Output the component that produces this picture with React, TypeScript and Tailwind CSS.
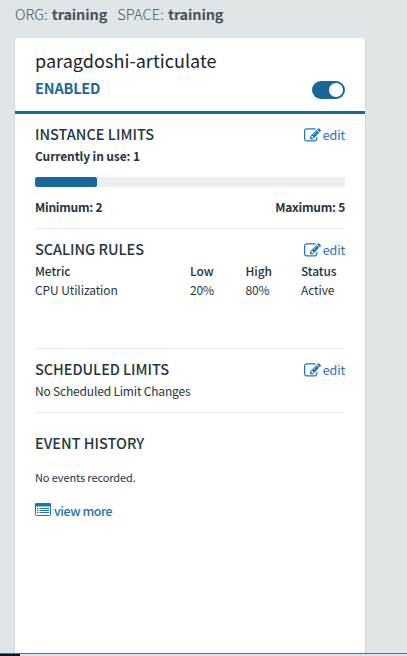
import React from "react";

const EditIcon = () => (
  <svg viewBox="0 0 1792 1792" className="h-[17px] w-[17px] fill-[#1f74b3]">
    <path d="M888 1184l116-116-152-152-116 116v56h96v96h56zm440-720q-16-16-33 1l-350 350q-17 17-1 33t33-1l350-350q17-17 1-33zm80 594v190q0 119-84.5 203.5t-203.5 84.5h-832q-119 0-203.5-84.5t-84.5-203.5v-832q0-119 84.5-203.5t203.5-84.5h832q63 0 117 25 15 7 18 23 3 17-9 29l-49 49q-14 14-32 8-23-6-45-6h-832q-66 0-113 47t-47 113v832q0 66 47 113t113 47h832q66 0 113-47t47-113v-126q0-13 9-22l64-64q15-15 35-7t20 29zm-96-738l288 288-672 672h-288v-288zm444 132l-92 92-288-288 92-92q28-28 68-28t68 28l152 152q28 28 28 68t-28 68z" />
  </svg>
);

const ListIcon = () => (
  <svg viewBox="0 0 16 13" className="mt-[-3px] h-[13px] w-[16px]">
    <rect x="0.5" y="0.5" width="15" height="12" rx="1" fill="#fff" stroke="#1f74b3" />
    <path d="M0 3.5V1.2Q0 0 1.2 0H14.8Q16 0 16 1.2V3.5Z" fill="#1f74b3" />
    <path d="M2 5.5h1.4M2 7.5h1.4M2 9.5h1.4M4.5 5.5h9.5M4.5 7.5h9.5M4.5 9.5h9.5" stroke="#1f74b3" />
  </svg>
);

const Edit = () => (
  <a className="flex h-5 items-center gap-[2px] pt-[2px] text-[12.5px] leading-5 text-[#1f74b3]">
    <EditIcon />
    <span className="-mr-[0.1px] tracking-[-0.1px]">edit</span>
  </a>
);

const heading = "text-[14.5px] leading-5 font-medium tracking-[-0.05px] whitespace-nowrap";

export default function App() {
  return (
    <div className="flex h-[656px] w-[407px] flex-col overflow-hidden bg-[#e0e5e8] font-['Noto_Sans_CJK_SC',sans-serif] text-[#243640]">
      <header className="flex h-[38px] shrink-0 gap-[10px] pt-1 pl-[15px] text-[14.5px] leading-5 whitespace-nowrap text-[#4a5861]">
        <div className="flex gap-1"><span className="font-light">ORG:</span><b className="tracking-[-0.15px] text-[#46535b]">training</b></div>
        <div className="flex gap-1"><span className="font-light tracking-[0.15px]">SPACE:</span><b className="tracking-[-0.15px] text-[#46535b]">training</b></div>
      </header>
      <main className="mx-[14px] flex w-[352px] flex-1 flex-col rounded-t-[4px] border-x border-[#d0d7dc] bg-white">
        <div className="flex h-[76px] shrink-0 items-start justify-between border-b-3 border-[#1a6799] px-5 pt-[10px]">
          <div>
            <h1 className="text-[18px] leading-6 font-normal tracking-[0.05px] whitespace-nowrap text-[#1b2529]">paragdoshi-articulate</h1>
            <div className="mt-[6px] text-[14.5px] leading-5 font-bold tracking-[-0.2px] text-[#1a6799]">ENABLED</div>
          </div>
          <div className="mt-[33px] flex h-[18px] w-[33px] items-center justify-end rounded-full bg-[#1a6799] pr-[2px]">
            <div className="h-[14px] w-[14px] rounded-full bg-white" />
          </div>
        </div>
        <section className="mx-5 h-[115px] shrink-0 border-b border-[#e9edef] pt-[10px]">
          <div className="flex justify-between"><h2 className="text-[14.5px] leading-5 font-medium whitespace-nowrap">INSTANCE LIMITS</h2><Edit /></div>
          <div className="mt-[2px] text-[12px] leading-5 font-bold tracking-[-0.12px]">Currently in use: 1</div>
          <div className="mt-[11px] h-[10px] overflow-hidden rounded-[2px] bg-[#ebeff0]">
            <div className="h-full w-[62px] rounded-[2px] bg-[#1a6799]" />
          </div>
          <div className="mt-[10px] flex justify-between text-[12px] leading-5 font-bold tracking-[-0.25px]"><span>Minimum: 2</span><span>Maximum: 5</span></div>
        </section>
        <section className="mx-5 h-[120px] shrink-0 border-b border-[#e9edef] pt-[10px]">
          <div className="flex justify-between"><h2 className={heading}>SCALING RULES</h2><Edit /></div>
          <div className="mt-[2px] grid grid-cols-[155px_55.5px_55.5px_44px] text-[12px] leading-[19px] tracking-[-0.1px] whitespace-nowrap">
            <span className="font-medium">Metric</span><span className="font-medium">Low</span><span className="font-medium">High</span><span className="font-medium">Status</span>
            <span>CPU Utilization</span><span>20%</span><span>80%</span><span>Active</span>
          </div>
        </section>
        <section className="mx-5 h-16 shrink-0 border-b border-[#e9edef] pt-[10px]">
          <div className="flex justify-between"><h2 className={heading}>SCHEDULED LIMITS</h2><Edit /></div>
          <p className="mt-[2px] text-[12px] leading-5 tracking-[-0.18px]">No Scheduled Limit Changes</p>
        </section>
        <section className="mx-5 flex-1 pt-[20px]">
          <h2 className="text-[14.5px] leading-5 font-medium whitespace-nowrap">EVENT HISTORY</h2>
          <p className="mt-[14px] text-[11px] leading-5 tracking-[-0.1px]">No events recorded.</p>
          <a className="mt-[14px] flex h-5 items-center gap-[3px] text-[12.5px] leading-5 tracking-[-0.45px] text-[#1f74b3]"><ListIcon /><span className="font-medium">view more</span></a>
        </section>
      </main>
      <footer className="h-[3px] shrink-0 border-t border-[#2a7ac4] bg-[#dce6f1]"><div className="h-[2px] w-5 bg-[#081527]" /></footer>
    </div>
  );
}
